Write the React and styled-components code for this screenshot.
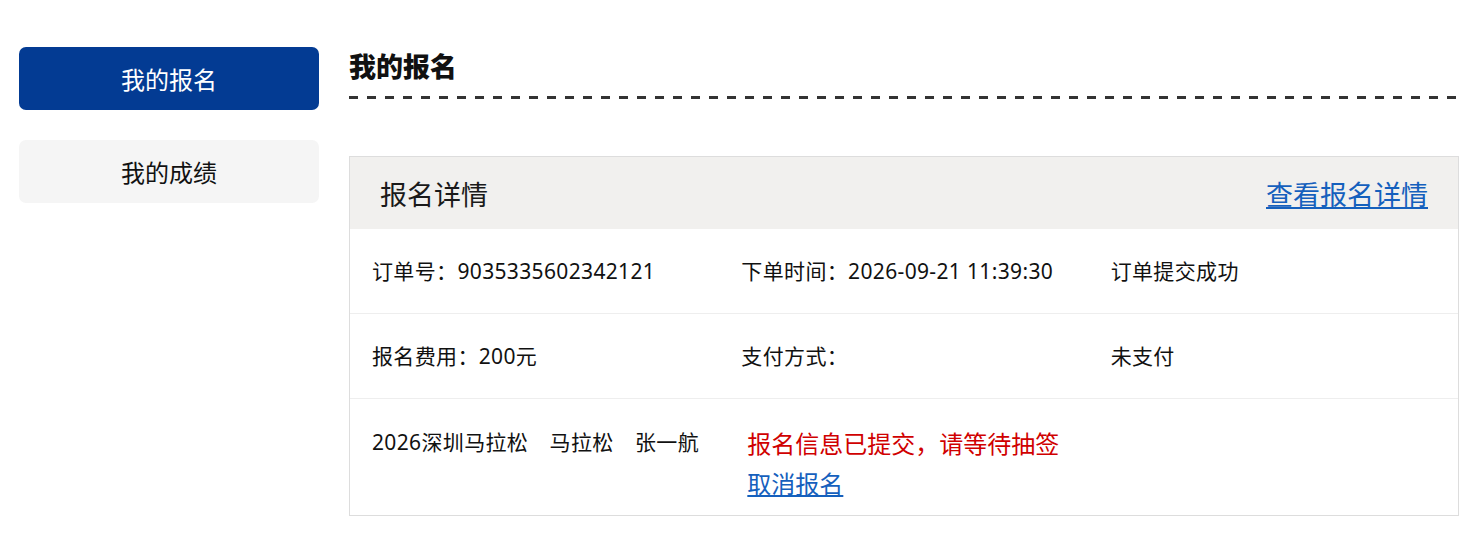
import React from 'react';
import styled, { createGlobalStyle } from 'styled-components';

const GlobalStyle = createGlobalStyle`
  body {
    margin: 0;
    background: #fff;
    font-family: "Noto Sans", "Noto Sans CJK SC", "Liberation Sans", sans-serif;
    color: #111;
  }
`;

const order = {
  no: '9035335602342121',
  time: '2026-09-21 11:39:30',
  status: '订单提交成功',
  fee: '200元',
  payWay: '',
  payStatus: '未支付',
  race: '2026深圳马拉松',
  item: '马拉松',
  name: '张一航',
};

const App = () => {
  return (
    <>
      <GlobalStyle />
      <Page>
        <Sidebar>
          <NavItem $active>我的报名</NavItem>
          <NavItem>我的成绩</NavItem>
        </Sidebar>

        <Main>
          <Title>我的报名</Title>

          <Card>
            <CardHeader>
              <CardTitle>报名详情</CardTitle>
              <HeaderLink href="#">查看报名详情</HeaderLink>
            </CardHeader>

            <Row>
              <Cell>订单号：{order.no}</Cell>
              <Cell>下单时间：{order.time}</Cell>
              <Cell>{order.status}</Cell>
            </Row>
            <Row>
              <Cell>报名费用：{order.fee}</Cell>
              <Cell>支付方式：{order.payWay}</Cell>
              <Cell>{order.payStatus}</Cell>
            </Row>
            <Row $last>
              <Cell>
                {order.race}　{order.item}　{order.name}
              </Cell>
              <StatusCell>
                <Notice>报名信息已提交，请等待抽签</Notice>
                <CancelLink href="#">取消报名</CancelLink>
              </StatusCell>
              <Cell />
            </Row>
          </Card>
        </Main>
      </Page>
    </>
  );
};

const Page = styled.div`
  display: flex;
  gap: 30px;
  padding: 47px 14px 0 19px;
`;

const Sidebar = styled.aside`
  display: flex;
  flex-direction: column;
  gap: 30px;
  width: 300px;
  flex-shrink: 0;
`;

const NavItem = styled.div`
  height: 63px;
  display: flex;
  align-items: center;
  justify-content: center;
  border-radius: 7px;
  font-size: 24px;
  cursor: pointer;
  background: ${(p) => (p.$active ? '#033b93' : '#f5f5f5')};
  color: ${(p) => (p.$active ? '#fff' : '#111')};
`;

const Main = styled.main`
  flex: 1;
  min-width: 0;
`;

const Title = styled.h2`
  margin: 0;
  font-size: 27px;
  font-weight: 800;
  line-height: 40px;
  padding-bottom: 12px;
  color: #111;
  background-image: repeating-linear-gradient(
    to right,
    #333 0 9px,
    transparent 9px 18px
  );
  background-size: 100% 3px;
  background-position: left bottom;
  background-repeat: no-repeat;
`;

const Card = styled.section`
  margin-top: 57px;
  border: 1px solid #dddddd;
`;

const CardHeader = styled.div`
  display: flex;
  align-items: center;
  justify-content: space-between;
  height: 72px;
  padding: 0 30px;
  background: #f1f0ee;
`;

const CardTitle = styled.span`
  font-size: 27px;
  color: #1a1a1a;
`;

const HeaderLink = styled.a`
  font-size: 27px;
  color: #1560bd;
  text-decoration: underline;
`;

const Row = styled.div`
  display: grid;
  grid-template-columns: repeat(3, 1fr);
  align-items: ${(p) => (p.$last ? 'start' : 'center')};
  min-height: ${(p) => (p.$last ? '0' : '84px')};
  padding: ${(p) => (p.$last ? '28px 0 11px' : '0')};
  & + & {
    border-top: 1px solid #eeeeee;
  }
`;

const Cell = styled.div`
  padding-left: 22px;
  font-size: 21px;
  line-height: 30px;
  letter-spacing: 0.35px;
  color: #111;
`;

const StatusCell = styled.div`
  display: flex;
  flex-direction: column;
  align-items: flex-start;
  padding-left: 28px;
  margin-top: -3px;
`;

const Notice = styled.span`
  font-size: 24px;
  line-height: 40px;
  color: #d00000;
`;

const CancelLink = styled.a`
  font-size: 24px;
  line-height: 40px;
  color: #1560bd;
  text-decoration: underline;
`;

export default App;
